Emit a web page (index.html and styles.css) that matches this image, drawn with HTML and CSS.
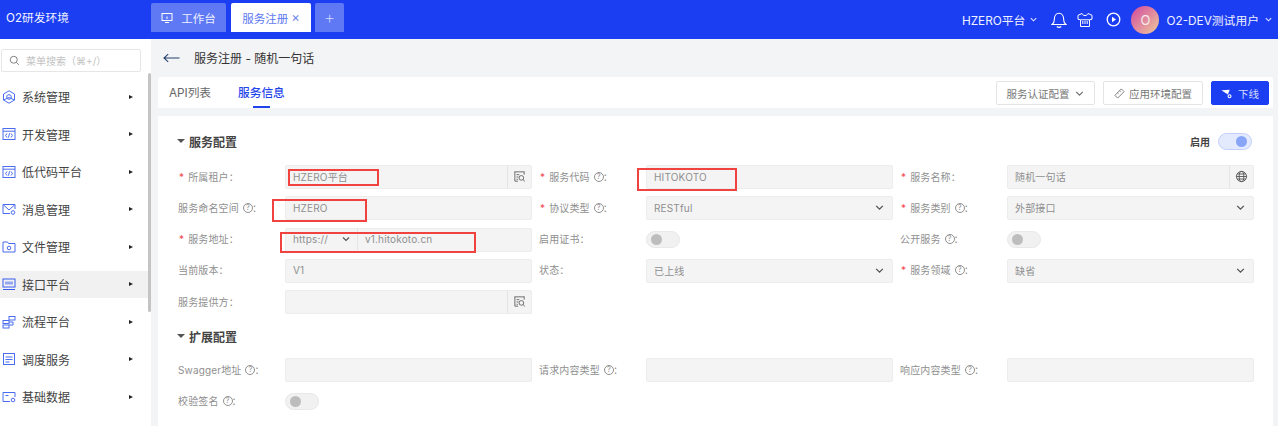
FILE: index.html
```html
<!DOCTYPE html>
<html lang="zh-CN">
<head>
<meta charset="utf-8">
<title>服务注册</title>
<link rel="stylesheet" href="styles.css">
</head>
<body>
<svg class="defs" width="0" height="0" aria-hidden="true">
  <symbol id="chev" viewBox="0 0 10 10"><path d="M2 3.500 5 6.500 8 3.500" fill="none" stroke="currentColor" stroke-width="1.200"/></symbol>
  <symbol id="lookup" viewBox="0 0 14 14"><g fill="none" stroke="#666" stroke-width="1"><path d="M1.500 2h11M2 2v10h3.500M12 2v3M3.800 5h3M3.800 7.500h2M3.800 10h1.500"/><circle cx="9" cy="8.500" r="2.500"/><path d="M10.800 10.300 12.800 12.300"/></g></symbol>
  <symbol id="code" viewBox="0 0 14 14"><g fill="none" stroke="#4a6cf0" stroke-width="1"><rect x="1" y="1.500" width="12" height="11"/><path d="M1 4.200h12M5 6.500 3.600 8.500 5 10.500M9 6.500l1.400 2L9 10.500M7.600 6.300 6.400 10.700"/></g></symbol>
</svg>
<div class="app">
  <header class="topbar">
    <div class="brand">O2研发环境</div>
    <div class="tab tab-work">
      <svg class="tab-icon" viewBox="0 0 12 12"><g fill="none" stroke="#fff" stroke-width="1"><rect x="1" y="1.500" width="10" height="7"/><path d="M4 10.500h4M6 4.500v2.500"/></g></svg>
      工作台
    </div>
    <div class="tab tab-active">服务注册<span class="tab-x">×</span></div>
    <div class="tab tab-add">+</div>
    <div class="top-right">
      <span class="top-text">HZERO平台</span>
      <svg class="chev-top" viewBox="0 0 10 10"><use href="#chev"/></svg>
      <svg class="ic-bell" viewBox="0 0 16 16"><g fill="none" stroke="#fff" stroke-width="1.100"><path d="M1 12.500c1.700-1 2.300-2.200 2.300-4.800C3.300 4 5.200 1.200 8 1.200s4.700 2.800 4.700 6.500c0 2.600.6 3.800 2.300 4.800z"/><path d="M5.800 14.500c1.200 1 3.200 1 4.400 0"/></g></svg>
      <svg class="ic-shirt" viewBox="0 0 16 16"><g fill="none" stroke="#fff" stroke-width="1"><path d="M5 1.500 1 3.300v3.900l2.500.6v6.700h9V7.800l2.500-.6V3.300l-4-1.800c-.5 1.400-1.500 2-3 2s-2.500-.6-3-2z"/><path d="M5.800 9v3M8 9v3M10.200 9v3M3.500 7.800h9"/></g></svg>
      <svg class="ic-play" viewBox="0 0 15 15"><circle cx="7.500" cy="7.500" r="6.300" fill="none" stroke="#fff" stroke-width="1.300"/><path d="M6 4.800 10 7.500 6 10.200z" fill="#fff"/></svg>
      <span class="avatar">O</span>
      <span class="top-text user">O2-DEV测试用户</span>
      <svg class="chev-top chev-user" viewBox="0 0 10 10"><use href="#chev"/></svg>
    </div>
  </header>

  <div class="body">
    <aside class="sidebar">
      <div class="search">
        <svg class="search-ic" viewBox="0 0 12 12"><g fill="none" stroke="#777" stroke-width="1"><circle cx="5.200" cy="5.200" r="3.800"/><path d="M8 8l2.700 2.700"/></g></svg>
        <span>菜单搜索（⌘+/）</span>
      </div>
      <nav class="menu">
        <div class="item"><svg class="mi" viewBox="0 0 14 14"><g fill="none" stroke="#4a6cf0" stroke-width="1"><path d="M7 .8 12.500 4v6L7 13.200 1.500 10V4z"/><circle cx="7" cy="7" r="2.300"/><path d="M1.500 10 7 7.500 12.500 10"/></g></svg><span>系统管理</span><i class="arrow"></i></div>
        <div class="item"><svg class="mi" viewBox="0 0 14 14"><use href="#code"/></svg><span>开发管理</span><i class="arrow"></i></div>
        <div class="item"><svg class="mi" viewBox="0 0 14 14"><use href="#code"/></svg><span>低代码平台</span><i class="arrow"></i></div>
        <div class="item"><svg class="mi" viewBox="0 0 14 14"><g fill="none" stroke="#4a6cf0" stroke-width="1"><path d="M8 11.500H1V2.500h12V7M1 2.500 7 8l6-5.500"/><circle cx="11" cy="10.500" r="1.800"/></g></svg><span>消息管理</span><i class="arrow"></i></div>
        <div class="item"><svg class="mi" viewBox="0 0 14 14"><g fill="none" stroke="#4a6cf0" stroke-width="1"><path d="M1 12V2h4.500l1 1.500H13V12z"/><circle cx="7" cy="8" r="1.800"/></g></svg><span>文件管理</span><i class="arrow"></i></div>
        <div class="item item-on"><svg class="mi" viewBox="0 0 14 14"><g fill="none" stroke="#3a5cf0" stroke-width="1"><rect x="1" y="2" width="12" height="8"/><path d="M1 12.500h12M4 4.500v3M6 4.500v3M8 4.500v3M10 4.500v3"/></g></svg><span>接口平台</span><i class="arrow"></i></div>
        <div class="item"><svg class="mi" viewBox="0 0 14 14"><g fill="none" stroke="#4a6cf0" stroke-width="1"><rect x="7" y="1.500" width="6" height="3.500"/><rect x="1" y="5.500" width="6" height="3"/><rect x="1" y="10" width="6" height="3"/><path d="M7 7h4v3H7"/></g></svg><span>流程平台</span><i class="arrow"></i></div>
        <div class="item"><svg class="mi" viewBox="0 0 14 14"><g fill="none" stroke="#4a6cf0" stroke-width="1"><rect x="1.500" y="1.500" width="11" height="11"/><path d="M3.500 5h7M3.500 7.500h7M3.500 10h4"/></g></svg><span>调度服务</span><i class="arrow"></i></div>
        <div class="item"><svg class="mi" viewBox="0 0 14 14"><g fill="none" stroke="#4a6cf0" stroke-width="1"><path d="M8 11.500H1V2.500h12V7M3.500 5.500h3"/><circle cx="11" cy="10" r="1.800"/></g></svg><span>基础数据</span><i class="arrow"></i></div>
      </nav>
      <div class="scrollbar"></div>
    </aside>

    <main class="content">
      <div class="page-head">
        <svg class="back" viewBox="0 0 18 10"><path d="M5.500 1 1 5l4.500 4M1 5h16.500" fill="none" stroke="#24406e" stroke-width="1.100"/></svg>
        <span class="page-title">服务注册 - 随机一句话</span>
      </div>

      <div class="tabs-card">
        <div class="tabs">
          <span class="t">API列表</span>
          <span class="t t-on">服务信息</span>
        </div>
        <div class="actions">
          <button class="btn btn-auth">服务认证配置<svg class="btn-chev" viewBox="0 0 10 10"><use href="#chev"/></svg></button>
          <button class="btn btn-env"><svg class="link" viewBox="0 0 12 12"><g fill="none" stroke="#777" stroke-width="1"><path d="M8 1 11 4 4 11 1 8z"/><path d="M3.800 5.200 5 6.400M6 3 7.200 4.200"/></g></svg>应用环境配置</button>
          <button class="btn btn-primary"><svg class="off" viewBox="0 0 12 12"><path d="M.5 2.500 9.500 2 7.500 7 5 5.500z" fill="#fff"/><circle cx="9.300" cy="9" r="1.600" fill="none" stroke="#fff" stroke-width="1.200"/></svg>下线</button>
        </div>
      </div>

      <div class="form-card">
        <div class="sec-head">
          <i class="caret"></i><span class="sec-title">服务配置</span>
          <div class="enable"><b>启用</b><span class="sw sw-on"></span></div>
        </div>
        <div class="grid grid-main">
          <div class="f"><label class="req">所属租户：</label><div class="ctl"><span class="val">HZERO平台</span><span class="suf"><svg class="suf-ic" viewBox="0 0 14 14"><use href="#lookup"/></svg></span></div></div>
          <div class="f"><label class="req">服务代码<i class="q">?</i>：</label><div class="ctl"><span class="val">HITOKOTO</span></div></div>
          <div class="f"><label class="req">服务名称：</label><div class="ctl"><span class="val">随机一句话</span><span class="suf"><svg class="suf-ic" viewBox="0 0 14 14"><g fill="none" stroke="#555" stroke-width="1"><circle cx="7" cy="7" r="5.500"/><ellipse cx="7" cy="7" rx="2.500" ry="5.500"/><path d="M1.500 7h11M2.300 4.300h9.400M2.300 9.700h9.400"/></g></svg></span></div></div>

          <div class="f"><label>服务命名空间<i class="q">?</i>：</label><div class="ctl"><span class="val">HZERO</span></div></div>
          <div class="f"><label class="req">协议类型<i class="q">?</i>：</label><div class="ctl"><span class="val">RESTful</span><svg class="sel-chev" viewBox="0 0 10 10"><use href="#chev"/></svg></div></div>
          <div class="f"><label class="req">服务类别<i class="q">?</i>：</label><div class="ctl"><span class="val">外部接口</span><svg class="sel-chev" viewBox="0 0 10 10"><use href="#chev"/></svg></div></div>

          <div class="f"><label class="req">服务地址：</label><div class="ctl"><span class="proto"><span>https://</span><svg class="proto-chev" viewBox="0 0 10 10"><use href="#chev"/></svg></span><span class="val">v1.hitokoto.cn</span></div></div>
          <div class="f"><label>启用证书：</label><span class="sw"></span></div>
          <div class="f"><label>公开服务<i class="q">?</i>：</label><span class="sw"></span></div>

          <div class="f"><label>当前版本：</label><div class="ctl"><span class="val">V1</span></div></div>
          <div class="f"><label>状态：</label><div class="ctl"><span class="val">已上线</span><svg class="sel-chev" viewBox="0 0 10 10"><use href="#chev"/></svg></div></div>
          <div class="f"><label class="req">服务领域<i class="q">?</i>：</label><div class="ctl"><span class="val">缺省</span><svg class="sel-chev" viewBox="0 0 10 10"><use href="#chev"/></svg></div></div>

          <div class="f"><label>服务提供方：</label><div class="ctl"><span class="val"></span><span class="suf"><svg class="suf-ic" viewBox="0 0 14 14"><use href="#lookup"/></svg></span></div></div>
        </div>

        <div class="sec-head sec-two">
          <i class="caret"></i><span class="sec-title">扩展配置</span>
        </div>
        <div class="grid grid-ext">
          <div class="f"><label>Swagger地址<i class="q">?</i>：</label><div class="ctl"></div></div>
          <div class="f"><label>请求内容类型<i class="q">?</i>：</label><div class="ctl"></div></div>
          <div class="f"><label>响应内容类型<i class="q">?</i>：</label><div class="ctl"></div></div>
          <div class="f"><label>校验签名<i class="q">?</i>：</label><span class="sw"></span></div>
        </div>

        <div class="mark mark-1"></div>
        <div class="mark mark-2"></div>
        <div class="mark mark-3"></div>
        <div class="mark mark-4"></div>
      </div>
    </main>
  </div>
</div>
</body>
</html>
```
FILE: styles.css
```css
* { box-sizing: border-box; }
html, body { margin: 0; padding: 0; height: 100%; overflow: hidden; }
body {
  font-family: Inter, "Noto Sans CJK SC", "Noto Sans", sans-serif;
  font-size: 12px;
  color: #333;
  background: #fff;
}
.defs { position: absolute; }
.app { width: 1278px; height: 426px; display: flex; flex-direction: column; }

/* top bar */
.topbar {
  height: 39px;
  flex: none;
  background: #1c3ef2;
  color: #fff;
  display: flex;
  align-items: flex-start;
}
.brand { width: 151px; padding-left: 6px; line-height: 37px; font-size: 11.700px; color: #f1f3ff; }
.tab {
  height: 29px;
  margin-top: 3px;
  display: flex;
  align-items: center;
  justify-content: center;
  border-radius: 2px 2px 0 0;
  font-size: 11.500px;
}
.tab-work { width: 75px; background: #5f79f5; color: #eef1ff; gap: 8px; }
.tab-icon { width: 12px; height: 12px; }
.tab-active { width: 80px; margin-left: 5px; background: #fff; color: #5d78f0; }
.tab-x { margin-left: 3px; font-size: 13px; color: #6f86ee; line-height: 1; }
.tab-add { width: 29px; margin-left: 4px; background: #5f79f5; color: #d4dbfd; font-size: 18px; font-weight: 200; }
.top-right { margin-left: auto; height: 39px; display: flex; align-items: center; }
.top-text { font-size: 11.800px; color: #eef1ff; }
.chev-top { width: 9px; height: 9px; margin-left: 4px; color: #dfe4ff; }
.ic-bell { width: 16px; height: 16px; margin-left: 13px; }
.ic-shirt { width: 16px; height: 16px; margin-left: 10px; }
.ic-play { width: 15px; height: 15px; margin-left: 13px; }
.avatar {
  width: 28px; height: 28px; margin-left: 10px;
  border-radius: 50%;
  background: linear-gradient(135deg, #d2479f, #eecb9c);
  color: #f5e9ee;
  font-size: 13px;
  display: flex; align-items: center; justify-content: center;
}
.user { margin-left: 7px; }
.chev-user { margin-left: 5px; margin-right: 5px; }

/* body */
.body { flex: 1; display: flex; min-height: 0; }
.sidebar { width: 151px; flex: none; background: #fff; padding-top: 10px; position: relative; }
.search {
  width: 140px; height: 23px; margin-left: 1px;
  border: 1px solid #e6e6e6; border-radius: 2px;
  display: flex; align-items: center; padding-left: 7px;
  font-size: 10px; color: #c2c2c2;
}
.search-ic { width: 11px; height: 11px; margin-right: 6px; flex: none; }
.menu { margin-top: 11px; display: flex; flex-direction: column; gap: 10.500px; }
.item {
  width: 148px; height: 27px;
  display: flex; align-items: center;
  padding-left: 2px;
  font-size: 12px; color: #444;
}
.item-on { background: #f1f1f1; }
.mi { width: 14px; height: 14px; flex: none; margin-right: 6px; }
.arrow {
  margin-left: auto; margin-right: 15px;
  border-left: 4px solid #222;
  border-top: 2.500px solid transparent;
  border-bottom: 2.500px solid transparent;
}
.scrollbar { position: absolute; left: 148px; top: 34px; width: 3px; height: 239px; background: #c4c4c4; border-radius: 2px; }

/* content */
.content { flex: 1; min-width: 0; background: #f3f4f6; padding: 0 5px 0 7px; }
.page-head { height: 38px; display: flex; align-items: center; padding: 0 0 1px 5px; }
.back { width: 17px; height: 10px; margin-right: 14px; }
.page-title { font-size: 12px; color: #333; }
.tabs-card {
  height: 31px;
  background: #fff;
  border-radius: 3px 3px 0 0;
  display: flex;
  justify-content: space-between;
}
.tabs { display: flex; padding-left: 11px; gap: 27px; }
.t { font-size: 11.700px; color: #666; line-height: 33px; height: 31px; position: relative; }
.t-on { color: #1f45ea; font-weight: 500; }
.t-on::after {
  content: ""; position: absolute; left: 15px; bottom: 0;
  width: 17px; height: 2px; background: #1f45ea;
}
.actions { display: flex; gap: 8px; padding: 4px 4px 0 0; }
.btn {
  height: 24px;
  background: #fff;
  border: 1px solid #e4e4e4;
  border-radius: 2px;
  font: inherit;
  font-size: 10.500px;
  color: #777;
  padding: 0;
  display: flex; align-items: center; justify-content: center;
}
.btn-auth { width: 99px; }
.btn-env { width: 100px; }
.btn-primary { width: 58px; background: #1c3ef2; border-color: #1c3ef2; color: #d5dcff; }
.btn-chev { width: 11px; height: 11px; margin-left: 4px; color: #777; }
.link { width: 11px; height: 11px; margin-right: 4px; }
.off { width: 11px; height: 11px; margin-right: 6px; }

/* form */
.form-card { margin-top: 8px; height: 320px; background: #fff; padding: 15px 0 0 20px; position: relative; }
.sec-head { height: 20px; display: flex; align-items: center; padding-right: 21px; }
.sec-two { margin-top: 12px; padding-right: 0; }
.caret {
  width: 0; height: 0; margin: 0 4px 0 -1px;
  border-top: 4px solid #555;
  border-left: 4px solid transparent;
  border-right: 4px solid transparent;
}
.sec-title { font-size: 12px; font-weight: 700; color: #444; }
.enable { margin-left: auto; display: flex; align-items: center; gap: 8px; }
.enable b { font-size: 10px; font-weight: 600; color: #444; }
.grid { display: grid; grid-template-columns: repeat(3, 361px); row-gap: 7.250px; }
.grid-main { margin-top: 14px; grid-auto-rows: 24px; }
.grid-ext { margin-top: 12px; grid-auto-rows: 24px; }
.f { display: flex; align-items: center; height: 24px; }
.f label {
  width: 107px; flex: none;
  font-size: 10px; color: #8f8f8f;
  letter-spacing: .15px;
  line-height: 22px;
  height: 24px;
  white-space: nowrap;
  display: flex; align-items: center;
  padding-bottom: 1px;
}
.req::before { content: "*"; color: #f0484f; margin-right: 4px; margin-left: 1px; }
.q {
  width: 10px; height: 10px; flex: none;
  margin-left: 4px; margin-right: -1px;
  border: 1px solid #8f8f8f; border-radius: 50%;
  font-size: 7.500px; font-style: normal; line-height: 8px; text-align: center;
}
.ctl {
  width: 247px; height: 24px;
  background: #f4f4f4;
  border: 1px solid #ececec;
  border-radius: 2px;
  display: flex; align-items: center;
  font-size: 10px; color: #8f8f8f;
  padding-bottom: 1px;
}
.val { flex: 1; padding-left: 7px; letter-spacing: .17px; white-space: nowrap; }
.suf { width: 24px; height: 22px; border-left: 1px solid #e4e4e4; display: flex; align-items: center; justify-content: center; flex: none; }
.suf-ic { width: 13px; height: 13px; }
.sel-chev { width: 11px; height: 11px; margin-right: 7px; color: #555; flex: none; }
.proto { width: 72px; height: 22px; border-right: 1px solid #e4e4e4; display: flex; align-items: center; padding-left: 7px; justify-content: space-between; padding-right: 6px; flex: none; letter-spacing: .17px; }
.proto-chev { width: 10px; height: 10px; color: #555; }
.sw { width: 34px; height: 17px; border-radius: 9px; background: #f1f1f1; border: 1px solid #e8e8e8; display: flex; align-items: center; padding-left: 4px; flex: none; }
.sw::after { content: ""; width: 11px; height: 11px; border-radius: 50%; background: #bdbdbd; }
.sw-on { background: #e3eafd; border-color: #c2d0fb; justify-content: flex-end; padding: 0 4px 0 0; }
.sw-on::after { background: #88a5f8; }

/* hand-drawn annotation boxes over the form */
.mark { position: absolute; border: 2px solid #f0433f; }
.mark-1 { left: 130px; top: 53px; width: 91px; height: 17px; }
.mark-2 { left: 114px; top: 83px; width: 95px; height: 23px; }
.mark-3 { left: 122px; top: 116px; width: 196px; height: 21px; }
.mark-4 { left: 479px; top: 52px; width: 100px; height: 23px; }
```
